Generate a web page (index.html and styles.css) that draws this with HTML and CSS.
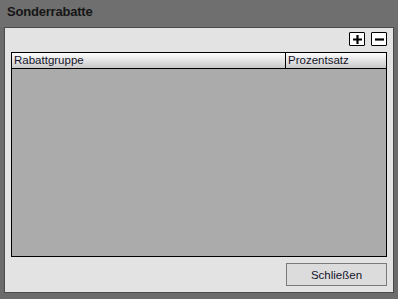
FILE: index.html
```html
<!DOCTYPE html>
<html lang="de">
<head>
    <meta charset="UTF-8">
    <title>Sonderrabatte</title>
    <link rel="stylesheet" href="styles.css">
</head>
<body>
    <div class="window">
        <div class="title">Sonderrabatte</div>

        <div class="panel">
            <!-- Add / remove buttons -->
            <div class="toolbar">
                <button class="icon-btn" title="Hinzufügen">
                    <svg width="11" height="11" viewBox="0 0 11 11">
                        <path d="M5.5 1v9M1 5.5h9" stroke="#000" stroke-width="2.2" fill="none"/>
                    </svg>
                </button>
                <button class="icon-btn" title="Entfernen">
                    <svg width="11" height="11" viewBox="0 0 11 11">
                        <path d="M1 5.5h9" stroke="#000" stroke-width="2.2" fill="none"/>
                    </svg>
                </button>
            </div>

            <!-- Grid -->
            <div class="grid">
                <div class="grid-head">
                    <div class="col col-group">Rabattgruppe</div>
                    <div class="col col-percent">Prozentsatz</div>
                </div>
                <div class="grid-body"></div>
            </div>

            <div class="footer">
                <button class="close-btn">Schließen</button>
            </div>
        </div>
    </div>
</body>
</html>
```

FILE: styles.css
```css
/* General */
body {
    margin: 0;
    background-color: #6b6b6b;
    font-family: 'Liberation Sans', Arial, sans-serif;
    color: #111;
}

.window {
    width: 398px;
    height: 299px;
    display: flex;
    flex-direction: column;
}

.title {
    height: 27px;
    padding-left: 7px;
    line-height: 23px;
    font-size: 13px;
    font-weight: bold;
    letter-spacing: -0.2px;
    color: #151515;
    background-color: #6f6f6f;
}

/* Panel */
.panel {
    margin: 0 4px 6px 4px;
    flex: 1;
    background-color: #e3e3e3;
    border: 1px solid #4b4b4b;
    display: flex;
    flex-direction: column;
    padding: 4px 6px 6px 6px;
}

.toolbar {
    display: flex;
    justify-content: flex-end;
    gap: 6px;
    height: 20px;
}

.icon-btn {
    width: 16px;
    height: 14px;
    padding: 0;
    margin: 0;
    background-color: #fff;
    border: 1px solid #000;
    border-radius: 1px;
    display: flex;
    justify-content: center;
    align-items: center;
}

/* Grid */
.grid {
    flex: 1;
    border: 1px solid #000;
    background-color: #ababab;
    display: flex;
    flex-direction: column;
}

.grid-head {
    display: flex;
    height: 15px;
    border-bottom: 1px solid #000;
    background: linear-gradient(#fdfdfd, #e6e6e6 45%, #c9c9c9);
}

.col {
    font-size: 11.5px;
    line-height: 15px;
    padding-left: 2px;
    color: #14142a;
}

.col-group {
    width: 271px;
    border-right: 1px solid #000;
}

.col-percent {
    flex: 1;
}

.grid-body {
    flex: 1;
}

/* Footer */
.footer {
    display: flex;
    justify-content: flex-end;
    padding-top: 6px;
}

.close-btn {
    width: 101px;
    height: 23px;
    background-color: #dcdcdc;
    border: 1px solid #7a7a7a;
    font-family: 'Liberation Sans', Arial, sans-serif;
    font-size: 11.5px;
    color: #14142a;
    padding: 0;
}
```
